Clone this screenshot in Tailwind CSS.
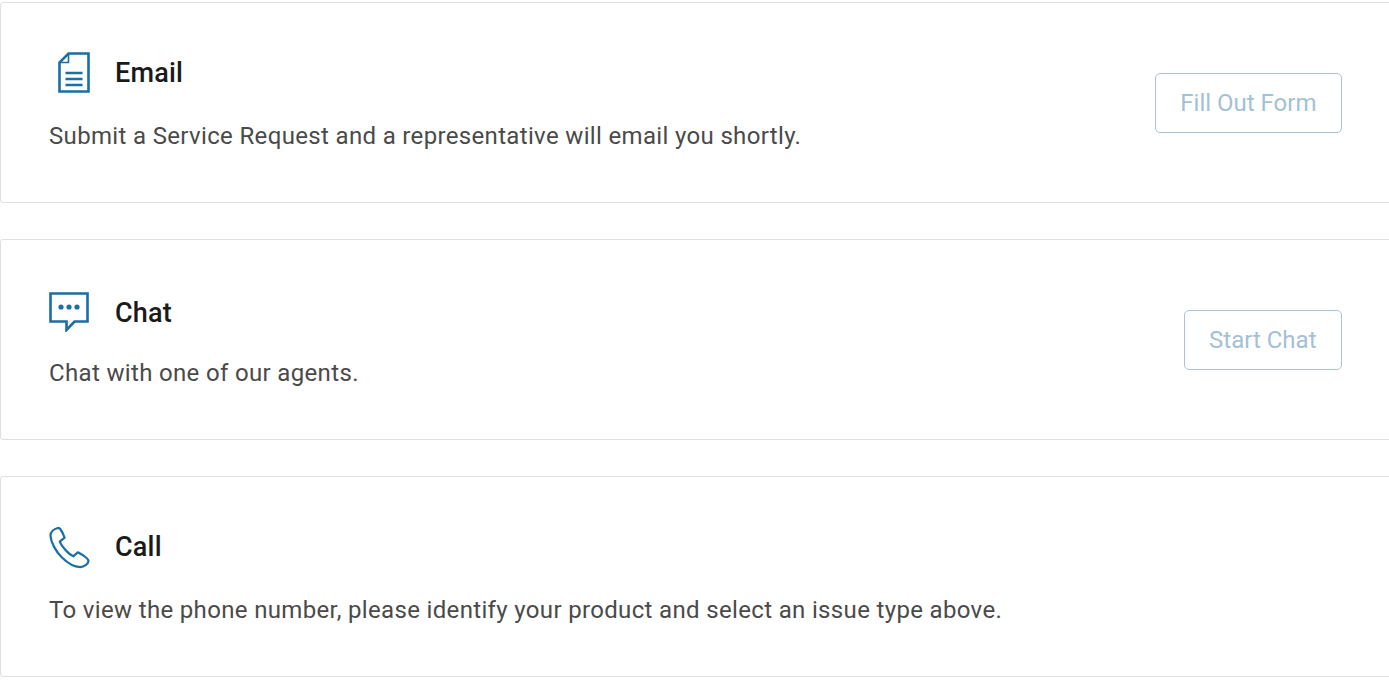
<!DOCTYPE html>
<html lang="en">
<head>
  <meta charset="UTF-8" />
  <title>Contact Us</title>
  <script src="https://cdn.jsdelivr.net/npm/@tailwindcss/browser@4"></script>
</head>
<body class="bg-white font-['Roboto',sans-serif] overflow-hidden">
  <div class="pt-[2px] flex flex-col gap-[36px] w-[1394px]">

    <div class="h-[201px] border border-[#dfdfdf] rounded-[3px] pl-[48px] pr-[51px] flex items-center justify-between">
      <div class="self-start pt-[44px]">
        <div class="flex items-center h-[50px]">
          <div class="w-[66px] shrink-0">
            <svg class="ml-[9px]" width="32" height="41" viewBox="0 0 32 41" fill="none" stroke="#1a6fa3" stroke-width="2.6">
              <path d="M10.5 1.5H30.5V39.5H1.5V10.5Z" />
              <path d="M10.5 2V10.5H2" stroke-width="1.6" />
              <path d="M7.5 21H24.5M7.5 27H24.5M7.5 33H24.5" />
            </svg>
          </div>
          <h2 class="pt-[2px] text-[27px] font-medium text-[#1a1a1a] tracking-[0.2px]">Email</h2>
        </div>
        <p class="mt-[22px] text-[24px] leading-[34px] text-[#4a4a4a] tracking-[0.34px]">Submit a Service Request and a representative will email you shortly.</p>
      </div>
      <button class="h-[60px] px-[24.5px] border border-[#a9c4d4] rounded-[5px] text-[24px] text-[#a3c1d5]">Fill Out Form</button>
    </div>

    <div class="h-[201px] border border-[#dfdfdf] rounded-[3px] pl-[48px] pr-[51px] flex items-center justify-between">
      <div class="self-start pt-[44px]">
        <div class="flex items-center h-[50px] pt-[6px]">
          <div class="w-[66px] shrink-0">
            <svg width="40" height="40" viewBox="0 0 40 40" fill="none" stroke="#1a6fa3" stroke-width="2.6">
              <path d="M1.5 1.5H38.5V29.5H25.5L17.5 38V29.5H1.5Z" />
              <circle cx="12" cy="15" r="2.6" fill="#1a6fa3" stroke="none" />
              <circle cx="20" cy="15" r="2.6" fill="#1a6fa3" stroke="none" />
              <circle cx="28" cy="15" r="2.6" fill="#1a6fa3" stroke="none" />
            </svg>
          </div>
          <h2 class="pt-[2px] text-[27px] font-medium text-[#1a1a1a] tracking-[0.2px]">Chat</h2>
        </div>
        <p class="mt-[22px] text-[24px] leading-[34px] text-[#4a4a4a] tracking-[0.34px]">Chat with one of our agents.</p>
      </div>
      <button class="h-[60px] px-[24.5px] border border-[#a9c4d4] rounded-[5px] text-[24px] text-[#a3c1d5]">Start Chat</button>
    </div>

    <div class="h-[201px] border border-[#dfdfdf] rounded-[3px] pl-[48px] pr-[51px] flex items-center justify-between">
      <div class="self-start pt-[44px]">
        <div class="flex items-center h-[50px]">
          <div class="w-[66px] shrink-0">
            <svg class="mt-[2px]" width="41" height="43" viewBox="0 0 42 44" fill="none" stroke="#1a6fa3" stroke-width="2.3">
              <path d="M9 2C5 3 1.5 6 1.5 10C2 17 7 26 13 32C19 38 26 42 32 42C36 42 40 39 40.5 36C40.5 34 38 32 35 30C33 29 31 27.5 29.5 27L25 31C20 29 13 21 11 16L16 12C15 9 13 5 11.5 3C11 2 10 2 9 2Z" stroke-linejoin="round" />
            </svg>
          </div>
          <h2 class="pt-[2px] text-[27px] font-medium text-[#1a1a1a] tracking-[0.2px]">Call</h2>
        </div>
        <p class="mt-[22px] text-[24px] leading-[34px] text-[#4a4a4a] tracking-[0.34px]">To view the phone number, please identify your product and select an issue type above.</p>
      </div>
    </div>

  </div>
</body>
</html>
